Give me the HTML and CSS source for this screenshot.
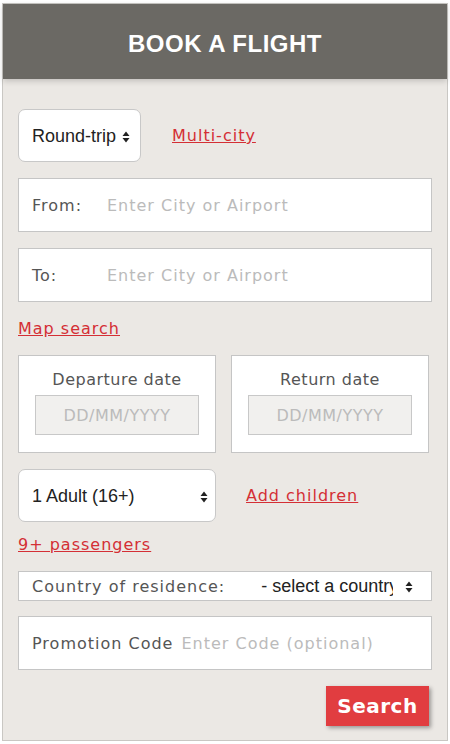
FILE: index.html
```html
<!DOCTYPE html>
<html lang="en">
<head>
    <meta charset="UTF-8">
    <meta name="viewport" content="width=device-width, initial-scale=1.0">
    <title>Book a flight</title>
    <link rel="stylesheet" href="styles.css">
</head>
<body>
    <div class="card">
        <div class="header">BOOK A FLIGHT</div>
        <form class="form">
            <div class="row trip-row">
                <div class="select-wrap trip">
                    <select class="sel">
                        <option>Round-trip</option>
                        <option>One-way</option>
                    </select>
                    <svg class="arrows" width="8" height="12" viewBox="0 0 8 12"><path d="M4 0.5L7.5 5H0.5Z M4 11.5L0.5 7H7.5Z" fill="#222"/></svg>
                </div>
                <a href="#" class="link">Multi-city</a>
            </div>

            <div class="box field">
                <label class="lbl">From:</label>
                <input class="inp" placeholder="Enter City or Airport">
            </div>
            <div class="box field">
                <label class="lbl">To:</label>
                <input class="inp" placeholder="Enter City or Airport">
            </div>

            <div class="link-line"><a href="#" class="link">Map search</a></div>

            <div class="dates">
                <div class="box date-box">
                    <div class="date-lbl">Departure date</div>
                    <input class="date-inp" placeholder="DD/MM/YYYY">
                </div>
                <div class="box date-box">
                    <div class="date-lbl">Return date</div>
                    <input class="date-inp" placeholder="DD/MM/YYYY">
                </div>
            </div>

            <div class="row pax-row">
                <div class="select-wrap pax">
                    <select class="sel">
                        <option>1 Adult (16+)</option>
                        <option>2 Adults (16+)</option>
                    </select>
                    <svg class="arrows" width="8" height="12" viewBox="0 0 8 12"><path d="M4 0.5L7.5 5H0.5Z M4 11.5L0.5 7H7.5Z" fill="#222"/></svg>
                </div>
                <a href="#" class="link">Add children</a>
            </div>

            <div class="link-line small-gap"><a href="#" class="link">9+ passengers</a></div>

            <div class="box country">
                <label class="lbl">Country of residence:</label>
                <div class="select-wrap ctry">
                    <select class="sel">
                        <option>- select a country -</option>
                    </select>
                    <svg class="arrows" width="8" height="12" viewBox="0 0 8 12"><path d="M4 0.5L7.5 5H0.5Z M4 11.5L0.5 7H7.5Z" fill="#222"/></svg>
                </div>
            </div>

            <div class="box field promo">
                <label class="lbl">Promotion Code</label>
                <input class="inp promo-inp" placeholder="Enter Code (optional)">
            </div>

            <div class="actions">
                <button type="button" class="btn-search">Search</button>
            </div>
        </form>
    </div>
</body>
</html>
```

FILE: styles.css
```css
body{
    margin: 0;
    background: #fff;
    font-family: "DejaVu Sans", Verdana, sans-serif;
}
.card{
    margin: 3px 2px 0;
    border: 1px solid #c9c7c3;
    background: #ebe8e4;
}
.header{
    height: 71px;
    padding-top: 4px;
    background: #6b6964;
    color: #fff;
    font-family: "Liberation Sans", Arial, sans-serif;
    font-weight: bold;
    font-size: 24px;
    letter-spacing: 0.5px;
    display: flex;
    align-items: center;
    justify-content: center;
    box-shadow: 0 2px 6px rgba(0,0,0,0.18);
}
.form{
    padding: 30px 15px 14px;
}
.row{
    display: flex;
    align-items: center;
}
.trip-row{
    gap: 31px;
}
.pax-row{
    gap: 30px;
    margin-top: 16px;
}
.link{
    color: #d42f35;
    font-size: 16px;
    letter-spacing: 1px;
    text-decoration: underline;
}
.select-wrap{
    position: relative;
}
.sel{
    appearance: none;
    -webkit-appearance: none;
    font-family: "Liberation Sans", Arial, sans-serif;
    font-size: 18px;
    color: #222;
    background: #fff;
    border: 1px solid #c8c8c8;
    border-radius: 7px;
    padding: 0 18px 0 13px;
    height: 53px;
    outline: none;
}
.arrows{
    position: absolute;
    top: 50%;
    margin-top: -5px;
    pointer-events: none;
}
.trip .sel{
    width: 123px;
}
.trip .arrows{
    left: 104px;
}
.pax .sel{
    width: 198px;
}
.pax .arrows{
    left: 182px;
}
.box{
    background: #fff;
    border: 1px solid #c5c5c5;
}
.field{
    display: flex;
    align-items: center;
    height: 52px;
    margin-top: 16px;
    padding-left: 13px;
}
.lbl{
    color: #555;
    font-size: 16px;
    letter-spacing: 1px;
    width: 75px;
    flex-shrink: 0;
}
.inp{
    border: none;
    outline: none;
    flex: 1;
    font-family: inherit;
    font-size: 16px;
    letter-spacing: 1px;
    padding: 0;
    color: #333;
    background: transparent;
}
.inp::placeholder, .date-inp::placeholder{
    color: #bbb;
}
.link-line{
    height: 20px;
    line-height: 20px;
    margin: 17px 0 16px;
}
.small-gap{
    margin: 13px 0 16px;
}
.dates{
    display: grid;
    grid-template-columns: 198px 198px;
    gap: 15px;
}
.date-box{
    height: 96px;
    text-align: center;
}
.date-lbl{
    color: #555;
    font-size: 16px;
    letter-spacing: 0.5px;
    line-height: 20px;
    margin-top: 14px;
}
.date-inp{
    display: block;
    box-sizing: border-box;
    width: 164px;
    height: 40px;
    margin: 5px auto 0 16px;
    border: 1px solid #c8c8c8;
    background: #f1f0ee;
    font-family: inherit;
    font-size: 16px;
    letter-spacing: 0.5px;
    text-align: center;
    outline: none;
}
.country{
    display: flex;
    align-items: center;
    height: 28px;
    padding-left: 13px;
}
.country .lbl{
    width: auto;
    margin-right: 23px;
}
.ctry .sel{
    border: none;
    border-radius: 0;
    height: 28px;
    width: 175px;
    padding: 0 30px 0 13px;
}
.ctry .arrows{
    left: 157px;
}
.promo{
    margin-top: 15px;
}
.promo .lbl{
    width: auto;
    margin-right: 8px;
}
.promo-inp{
    flex: none;
    width: 191px;
}
.actions{
    display: flex;
    justify-content: flex-end;
    margin: 16px 3px 0 0;
}
.btn-search{
    width: 103px;
    height: 40px;
    border: none;
    background: #e13d40;
    color: #fff;
    font-family: "DejaVu Sans", Verdana, sans-serif;
    font-weight: bold;
    font-size: 20px;
    letter-spacing: 0.5px;
    box-shadow: 2px 2px 4px rgba(0,0,0,0.35);
    cursor: pointer;
}
```
